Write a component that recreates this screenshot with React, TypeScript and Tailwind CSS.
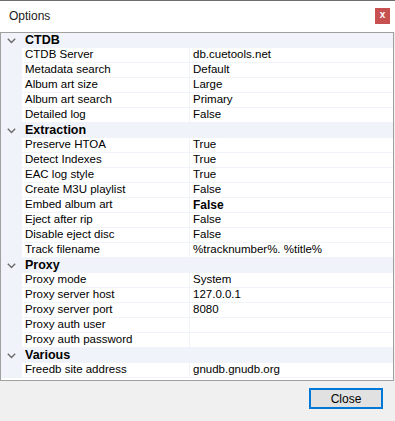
import React from "react";

type Row =
  | { kind: "cat"; name: string }
  | { kind: "prop"; name: string; value: string; bold?: boolean };

const rows: Row[] = [
  { kind: "cat", name: "CTDB" },
  { kind: "prop", name: "CTDB Server", value: "db.cuetools.net" },
  { kind: "prop", name: "Metadata search", value: "Default" },
  { kind: "prop", name: "Album art size", value: "Large" },
  { kind: "prop", name: "Album art search", value: "Primary" },
  { kind: "prop", name: "Detailed log", value: "False" },
  { kind: "cat", name: "Extraction" },
  { kind: "prop", name: "Preserve HTOA", value: "True" },
  { kind: "prop", name: "Detect Indexes", value: "True" },
  { kind: "prop", name: "EAC log style", value: "True" },
  { kind: "prop", name: "Create M3U playlist", value: "False" },
  { kind: "prop", name: "Embed album art", value: "False", bold: true },
  { kind: "prop", name: "Eject after rip", value: "False" },
  { kind: "prop", name: "Disable eject disc", value: "False" },
  { kind: "prop", name: "Track filename", value: "%tracknumber%. %title%" },
  { kind: "cat", name: "Proxy" },
  { kind: "prop", name: "Proxy mode", value: "System" },
  { kind: "prop", name: "Proxy server host", value: "127.0.0.1" },
  { kind: "prop", name: "Proxy server port", value: "8080" },
  { kind: "prop", name: "Proxy auth user", value: "" },
  { kind: "prop", name: "Proxy auth password", value: "" },
  { kind: "cat", name: "Various" },
  { kind: "prop", name: "Freedb site address", value: "gnudb.gnudb.org" },
];

function Chevron() {
  return (
    <svg width="9" height="6" viewBox="0 0 9 6" className="block">
      <polyline
        points="0.8,0.8 4.5,4.5 8.2,0.8"
        fill="none"
        stroke="#6a6a6a"
        strokeWidth="1.4"
      />
    </svg>
  );
}

export default function App() {
  return (
    <div
      className="w-[395px] h-[421px] bg-[#f0f0f0] flex flex-col overflow-hidden text-black"
      style={{ fontFamily: '"Liberation Sans", Arial, sans-serif' }}
    >
      <div className="h-[32px] bg-white border-t border-[#6f6f6f] flex items-start justify-between">
        <span className="text-[12px] text-[#1a1a1a] ml-[9px] mt-[7px] leading-[16px]">Options</span>
        <div className="mt-[7px] mr-[5px] w-[15px] h-[16px] bg-[#c75050] flex items-center justify-center text-white text-[10px] font-bold leading-none pb-[2px]">
          x
        </div>
      </div>
      <div className="w-[394px] h-[349px] border border-[#a0a0a0] bg-white flex flex-col">
        {rows.map((r, i) =>
          r.kind === "cat" ? (
            <div key={i} className="h-[15px] flex items-center bg-[#f0f4fa] shrink-0">
              <div className="w-[21px] flex items-center justify-center">
                <Chevron />
              </div>
              <span className="pl-[3px] text-[12.5px] font-bold leading-none">{r.name}</span>
            </div>
          ) : (
            <div key={i} className="h-[15px] flex bg-[#f0f4fa] shrink-0">
              <div className="w-[21px]" />
              <div className="w-[167px] h-[14px] bg-white flex items-center pl-[3px] text-[11.5px] leading-none">
                {r.name}
              </div>
              <div className="w-[1px]" />
              <div
                className={
                  "flex-1 h-[14px] bg-white flex items-center pl-[3px] leading-none " +
                  (r.bold ? "font-bold text-[12px]" : "text-[11.5px]")
                }
              >
                {r.value}
              </div>
            </div>
          )
        )}
      </div>
      <div className="flex justify-end pt-[7px] pr-[12px]">
        <div className="w-[74px] h-[21px] border-2 border-[#0078d7] bg-[#e1e1e1] flex items-center justify-center text-[12px] leading-none">
          Close
        </div>
      </div>
    </div>
  );
}
